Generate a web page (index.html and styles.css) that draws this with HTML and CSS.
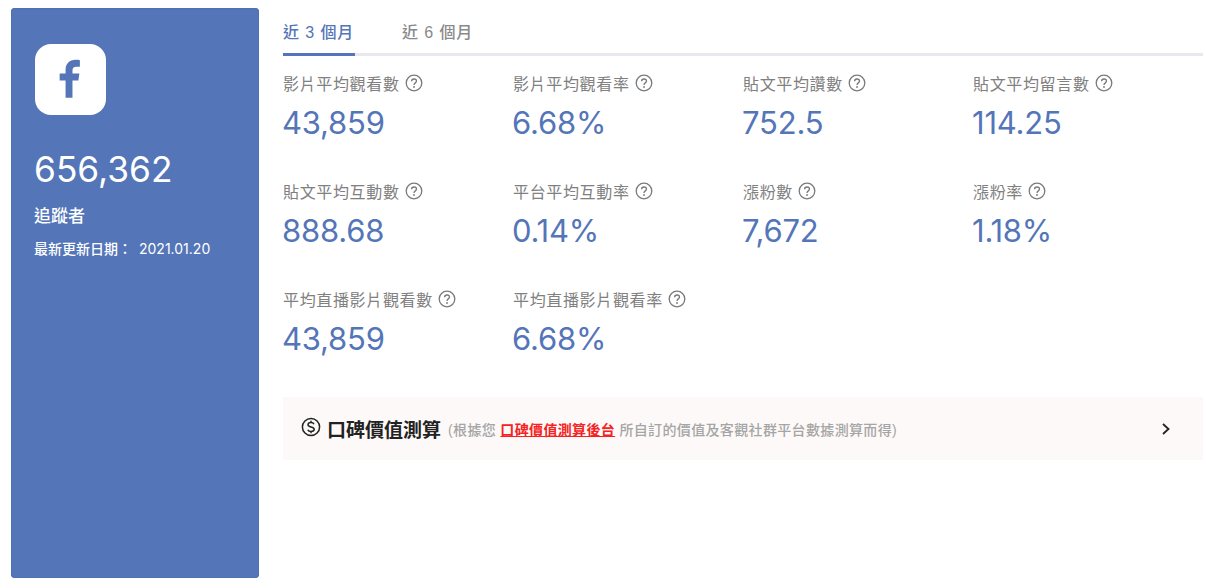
FILE: index.html
```html
<!DOCTYPE html>
<html lang="zh-Hant">
<head>
<meta charset="utf-8">
<title>Facebook 數據</title>
<link rel="stylesheet" href="styles.css">
</head>
<body>
<div class="page">
  <aside class="card">
    <div class="logo">
      <svg viewBox="0 0 72 72" width="71" height="71"><path fill="#5475b8" d="M31 54.500V37H25V30H31V26C31 20 35 16 41 16C43 16 44.500 16.200 45.500 16.400V23H42C39 23 38 24.500 38 27V30H45L44 37H38V54.500Z"/></svg>
    </div>
    <div class="followers">656,362</div>
    <div class="followers-label">追蹤者</div>
    <div class="updated"><span>最新更新日期：</span><span class="date">2021.01.20</span></div>
  </aside>
  <main class="main">
    <nav class="tabs">
      <div class="tab active">近 3 個月</div>
      <div class="tab">近 6 個月</div>
    </nav>
    <section class="grid">
      <div class="stat"><div class="label">影片平均觀看數<svg class="help" viewBox="0 0 18 18"><use href="#q"/></svg></div><div class="value">43,859</div></div>
      <div class="stat"><div class="label">影片平均觀看率<svg class="help" viewBox="0 0 18 18"><use href="#q"/></svg></div><div class="value">6.68%</div></div>
      <div class="stat"><div class="label">貼文平均讚數<svg class="help" viewBox="0 0 18 18"><use href="#q"/></svg></div><div class="value">752.5</div></div>
      <div class="stat"><div class="label">貼文平均留言數<svg class="help" viewBox="0 0 18 18"><use href="#q"/></svg></div><div class="value">114.25</div></div>
      <div class="stat"><div class="label">貼文平均互動數<svg class="help" viewBox="0 0 18 18"><use href="#q"/></svg></div><div class="value">888.68</div></div>
      <div class="stat"><div class="label">平台平均互動率<svg class="help" viewBox="0 0 18 18"><use href="#q"/></svg></div><div class="value">0.14%</div></div>
      <div class="stat"><div class="label">漲粉數<svg class="help" viewBox="0 0 18 18"><use href="#q"/></svg></div><div class="value">7,672</div></div>
      <div class="stat"><div class="label">漲粉率<svg class="help" viewBox="0 0 18 18"><use href="#q"/></svg></div><div class="value">1.18%</div></div>
      <div class="stat"><div class="label">平均直播影片觀看數<svg class="help" viewBox="0 0 18 18"><use href="#q"/></svg></div><div class="value">43,859</div></div>
      <div class="stat"><div class="label">平均直播影片觀看率<svg class="help" viewBox="0 0 18 18"><use href="#q"/></svg></div><div class="value">6.68%</div></div>
    </section>
    <section class="banner">
      <svg class="dollar" viewBox="0 0 20 20" width="20" height="20"><circle cx="10" cy="10" r="8.600" fill="none" stroke="#222" stroke-width="1.500"/><path d="M13 7.200C12.500 6 11.300 5.500 10 5.500C8.300 5.500 7 6.300 7 7.700C7 10.600 13.200 9.300 13.200 12.300C13.200 13.700 11.800 14.500 10 14.500C8.500 14.500 7.300 13.900 6.800 12.700M10 3.700V5.500M10 14.500V16.300" fill="none" stroke="#222" stroke-width="1.500"/></svg>
      <strong class="banner-title">口碑價值測算</strong>
      <span class="banner-note">(根據您 <a class="banner-link" href="#">口碑價值測算後台</a> 所自訂的價值及客觀社群平台數據測算而得)</span>
      <svg class="chevron" viewBox="0 0 10 14" width="10" height="14"><path d="M2 2L7.500 7L2 12" fill="none" stroke="#222" stroke-width="1.800"/></svg>
    </section>
  </main>
</div>
<svg class="defs" width="0" height="0"><defs><g id="q"><circle cx="9" cy="9" r="7.800" fill="none" stroke="#7a7a7a" stroke-width="1.300"/><path d="M6.600 7.200C6.600 5.800 7.700 5 9 5C10.400 5 11.500 5.800 11.500 7.100C11.500 8.900 9 8.900 9 10.900" fill="none" stroke="#7a7a7a" stroke-width="1.300"/><circle cx="9" cy="13" r=".9" fill="#7a7a7a"/></g></defs></svg>
</body>
</html>
```

FILE: styles.css
```css
* { box-sizing: border-box; }
html, body { margin: 0; height: 100%; background: #fff; }
body { font-family: "Liberation Sans", "Noto Sans CJK TC", sans-serif; overflow: hidden; }
.page { display: flex; align-items: flex-start; width: 1206px; height: 588px; padding: 8px 3px 0 11px; }
.card { flex: 0 0 248px; height: 570px; background: #5475b8; border-radius: 4px; padding: 36px 23px 0; color: #fff; box-shadow: inset 0 0 0 1px #4d70b8; }
.logo { width: 71px; height: 71px; margin-left: 1px; background: #fff; border-radius: 16px; }
.logo svg { display: block; }
.followers { margin-top: 34px; font-family: Inter, sans-serif; font-size: 35.300px; line-height: 42px; }
.followers-label { margin-top: 14px; font-size: 17px; line-height: 24px; font-weight: 500; }
.updated { margin-top: 10px; font-size: 14px; line-height: 20px; display: flex; font-weight: 500; }
.date { margin-left: 7px; font-family: Inter, sans-serif; font-weight: 400; font-size: 14px; }
.main { flex: 1; margin-left: 24px; min-width: 0; }
.tabs { display: flex; height: 48px; border-bottom: 3px solid #e8e8ee; }
.tab { width: 72px; margin-right: 47px; font-size: 16px; line-height: 50px; color: #8a8a8a; font-weight: 500; height: 48px; letter-spacing: .9px; white-space: nowrap; }
.tab.active { color: #5475b8; border-bottom: 3px solid #5475b8; }
.grid { display: grid; grid-template-columns: repeat(4, 230px); grid-auto-rows: 108px; padding-top: 15px; }
.label { display: flex; align-items: center; height: 24px; font-size: 16px; letter-spacing: .65px; color: #808080; }
.help { width: 18px; height: 18px; margin-left: 5px; }
.value { margin-top: 8px; margin-left: -1px; font-family: Inter, sans-serif; font-size: 31px; letter-spacing: -.2px; line-height: 40px; color: #5475b8; }
.banner { display: flex; align-items: center; height: 63px; margin-top: 2px; padding: 0 32px 0 18px; background: #fdf9f8; }
.dollar { margin: 0 6px 4px 0; }
.banner-title { font-size: 19px; color: #222; font-weight: 700; }
.banner-note { margin-left: 7px; font-size: 14px; letter-spacing: .35px; color: #a5a5a5; font-weight: 500; }
.banner-link { color: #f5221f; font-weight: 700; }
.chevron { margin-left: auto; }
.defs { position: absolute; }
```
